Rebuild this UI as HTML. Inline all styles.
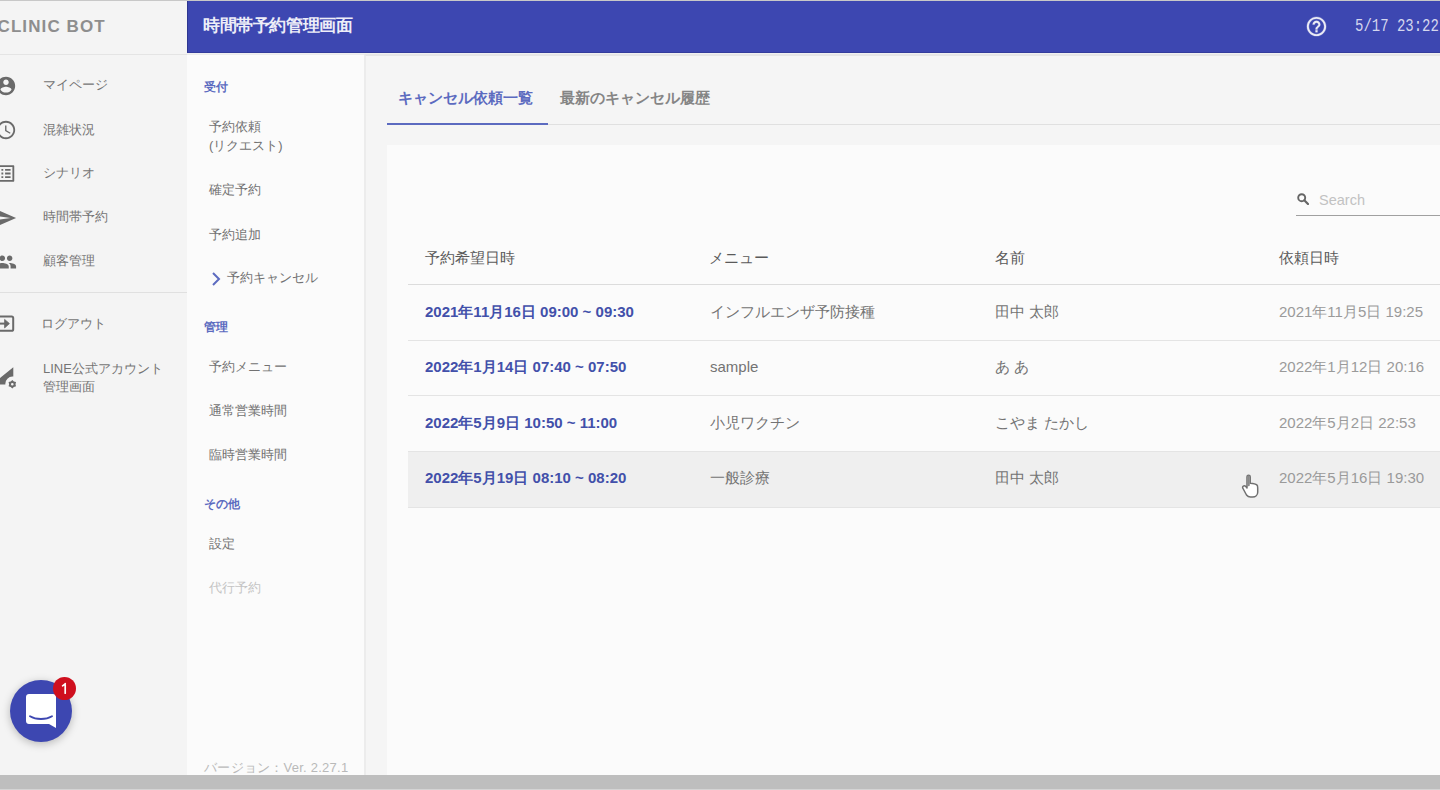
<!DOCTYPE html>
<html><head><meta charset="utf-8">
<style>
*{margin:0;padding:0;box-sizing:border-box}
html,body{width:1440px;height:790px;overflow:hidden;background:#f0f0f0;font-family:"Liberation Sans",sans-serif}
.a{position:absolute;white-space:nowrap}
#topline{left:0;top:0;width:1440px;height:1px;background:#c8c8c8}
#logo{left:0;top:1px;width:187px;height:54px;background:#f4f4f4;border-bottom:1px solid #e4e4e4}
#logotxt{left:-2.5px;top:17px;font-size:17px;letter-spacing:1.1px;font-weight:bold;color:#8e8e8e}
#side1{left:0;top:55px;width:187px;height:720px;background:#f4f4f4}
#hdr{left:187px;top:1px;width:1253px;height:52px;background:#3d47b1;border-left:1px solid #2e3690;border-bottom:1px solid #343c9c}
#title{left:203px;top:14px;font-size:17px;letter-spacing:-.4px;font-weight:bold;color:#eeeef8}
#time{left:1355px;top:15px;font-family:"Liberation Mono",monospace;font-size:19px;color:#d4d6ee;transform-origin:0 0;transform:scaleX(.735)}
#side2{left:187px;top:54px;width:177px;height:721px;background:#fbfbfb;border-top:1px solid #ececec}
#main{left:364px;top:54px;width:1076px;height:721px;background:#f5f5f5;border-left:2px solid #ececec;border-top:2px solid #e6e6e6}
#card{left:387px;top:145px;width:1053px;height:630px;background:#fbfbfb}
#bottom{left:0;top:775px;width:1440px;height:15px;background:#bebebe;border-bottom:1px solid #d4d4d4}
.m1{left:43px;font-size:13px;color:#747474}
.ic{left:-5px;width:22px;height:22px}
.sh{left:204px;font-size:12px;font-weight:bold;color:#5c6bc0}
.s2{left:209px;font-size:13px;color:#727272}
.tab{top:89px;font-size:15px;font-weight:bold}
.th{top:249px;font-size:15px;color:#5a5a5a}
.c1{left:425px;font-size:15px;font-weight:bold;color:#4250aa}
.c2{left:710px;font-size:15px;color:#737373}
.c3{left:995px;font-size:15px;color:#737373}
.c4{left:1279px;font-size:15px;color:#9a9a9a}
.bd{left:408px;width:1032px;height:1px;background:#e4e4e4}
</style></head><body>
<div class="a" id="topline"></div>
<div class="a" id="side1"></div>
<div class="a" id="logo"></div>
<div class="a" id="logotxt">CLINIC BOT</div>
<div class="a" id="side2"></div>
<div class="a" id="main"></div>
<div class="a" id="hdr"></div>
<div class="a" id="title">時間帯予約管理画面</div>
<svg class="a" style="left:1305.2px;top:15.2px" width="23" height="23" viewBox="0 0 24 24"><path fill="#ececf6" stroke="#ececf6" stroke-width=".3" d="M11 18h2v-2h-2v2zm1-16C6.48 2 2 6.48 2 12s4.48 10 10 10 10-4.48 10-10S17.52 2 12 2zm0 18c-4.41 0-8-3.59-8-8s3.59-8 8-8 8 3.59 8 8-3.59 8-8 8zm0-14c-2.21 0-4 1.79-4 4h2c0-1.1.9-2 2-2s2 .9 2 2c0 2-3 1.75-3 5h2c0-2.25 3-2.5 3-5 0-2.21-1.79-4-4-4z"/></svg>
<div class="a" id="time">5/17 23:22</div>

<!-- left menu -->
<svg class="a ic" style="top:74.5px" viewBox="0 0 24 24"><path fill="#6a6a6a" d="M12 2C6.48 2 2 6.48 2 12s4.48 10 10 10 10-4.48 10-10S17.52 2 12 2zm0 3c1.66 0 3 1.34 3 3s-1.34 3-3 3-3-1.34-3-3 1.34-3 3-3zm0 14.2c-2.5 0-4.71-1.28-6-3.22.03-1.99 4-3.08 6-3.08 1.99 0 5.97 1.09 6 3.08-1.29 1.94-3.5 3.22-6 3.22z"/></svg>
<div class="a m1" style="top:76px">マイページ</div>
<svg class="a ic" style="top:118.7px" viewBox="0 0 24 24"><path fill="#6a6a6a" d="M11.99 2C6.47 2 2 6.48 2 12s4.47 10 9.99 10C17.52 22 22 17.52 22 12S17.52 2 11.99 2zM12 20c-4.42 0-8-3.58-8-8s3.58-8 8-8 8 3.58 8 8-3.58 8-8 8zm.5-13H11v6l5.25 3.15.75-1.23-4.5-2.67z"/></svg>
<div class="a m1" style="top:121px">混雑状況</div>
<svg class="a ic" style="top:162.3px;height:23px" viewBox="0 0 24 24"><path fill="#6a6a6a" d="M19 5v14H5V5h14m1.1-2H3.9c-.5 0-.9.4-.9.9v16.2c0 .4.4.9.9.9h16.2c.4 0 .9-.5.9-.9V3.9c0-.5-.5-.9-.9-.9zM11 7h6v2h-6V7zm0 4h6v2h-6v-2zm0 4h6v2h-6zM7 7h2v2H7zm0 4h2v2H7zm0 4h2v2H7z"/></svg>
<div class="a m1" style="top:164px">シナリオ</div>
<svg class="a ic" style="top:207px" viewBox="0 0 24 24"><path fill="#6a6a6a" d="M2.01 21L23 12 2.01 3 2 10l15 2-15 2z"/></svg>
<div class="a m1" style="top:208px">時間帯予約</div>
<svg class="a ic" style="top:251px" viewBox="0 0 24 24"><path fill="#6a6a6a" d="M16 11c1.66 0 2.99-1.34 2.99-3S17.66 5 16 5c-1.66 0-3 1.34-3 3s1.34 3 3 3zm-8 0c1.66 0 2.99-1.34 2.99-3S9.66 5 8 5C6.34 5 5 6.34 5 8s1.34 3 3 3zm0 2c-2.33 0-7 1.17-7 3.5V19h14v-2.5c0-2.33-4.67-3.5-7-3.5zm8 0c-.29 0-.62.02-.97.05 1.16.84 1.97 1.97 1.97 3.45V19h6v-2.5c0-2.33-4.67-3.5-7-3.5z"/></svg>
<div class="a m1" style="top:252px">顧客管理</div>
<div class="a" style="left:0;top:292px;width:187px;height:1px;background:#e0e0e0"></div>
<svg class="a" style="left:0;top:310px" width="25" height="25" viewBox="0 310 25 25"><rect x="-8" y="316.4" width="21.2" height="14.4" rx="1.6" fill="none" stroke="#6a6a6a" stroke-width="2"/><path d="M-4 323.6H6.5" stroke="#6a6a6a" stroke-width="2"/><path d="M4.6 319.4L9.4 323.6L4.6 327.9Z" fill="#6a6a6a" stroke="#6a6a6a" stroke-width=".8" stroke-linejoin="round"/></svg>
<div class="a m1" style="left:41px;top:315px">ログアウト</div>
<svg class="a" style="left:0;top:360px" width="25" height="35" viewBox="0 360 25 35"><path fill="#6a6a6a" d="M-8 384.6L13.3 367.2V376.6A7.2 7.2 0 0 0 5.4 384.6Z"/><path fill="#6a6a6a" fill-rule="evenodd" d="M12.30 379.90 L13.90 381.43 L16.02 382.05 L15.50 384.20 L16.02 386.35 L13.90 386.97 L12.30 388.50 L10.70 386.97 L8.58 386.35 L9.10 384.20 L8.58 382.05 L10.70 381.43 Z M13.600000000000001 384.2 A1.3 1.3 0 1 0 11.0 384.2 A1.3 1.3 0 1 0 13.600000000000001 384.2Z"/></svg>
<div class="a m1" style="top:360px;line-height:17.5px">LINE公式アカウント<br>管理画面</div>

<!-- sub sidebar -->
<div class="a sh" style="top:79px">受付</div>
<div class="a s2" style="top:117px;line-height:19px">予約依頼<br>(リクエスト)</div>
<div class="a s2" style="top:181px">確定予約</div>
<div class="a s2" style="top:226px">予約追加</div>
<svg class="a" style="left:208px;top:270px" width="16" height="18" viewBox="0 0 16 18"><path d="M5 3l6 6-6 6" fill="none" stroke="#5c6bc0" stroke-width="2"/></svg>
<div class="a s2" style="left:227px;top:269px">予約キャンセル</div>
<div class="a sh" style="top:319px">管理</div>
<div class="a s2" style="top:358px">予約メニュー</div>
<div class="a s2" style="top:402px">通常営業時間</div>
<div class="a s2" style="top:446px">臨時営業時間</div>
<div class="a sh" style="top:496px">その他</div>
<div class="a s2" style="top:535px">設定</div>
<div class="a s2" style="top:579px;color:#c4c4c4">代行予約</div>
<div class="a" style="left:204px;top:759px;font-size:13px;letter-spacing:.25px;color:#b9b9b9">バージョン：Ver. 2.27.1</div>

<!-- tabs -->
<div class="a tab" style="left:398px;color:#5c6bc0">キャンセル依頼一覧</div>
<div class="a tab" style="left:560px;color:#858585">最新のキャンセル履歴</div>
<div class="a" style="left:387px;top:124px;width:1053px;height:1px;background:#e0e0e0"></div>
<div class="a" style="left:387px;top:122.5px;width:161px;height:2.5px;background:#5c6bc0"></div>

<div class="a" id="card"></div>
<!-- search -->
<svg class="a" style="left:1297px;top:193px" width="12" height="12" viewBox="0 0 12 12"><circle cx="4.7" cy="4.7" r="3.5" fill="none" stroke="#666" stroke-width="1.9"/><path d="M7.3 7.3L11 11" stroke="#666" stroke-width="2.2" stroke-linecap="round"/></svg>
<div class="a" style="left:1319px;top:191.5px;font-size:14.5px;color:#c2c2c2">Search</div>
<div class="a" style="left:1296px;top:215px;width:144px;height:1px;background:#a0a0a0"></div>

<!-- table -->
<div class="a th" style="left:425px">予約希望日時</div>
<div class="a th" style="left:709px">メニュー</div>
<div class="a th" style="left:995px">名前</div>
<div class="a th" style="left:1279px">依頼日時</div>
<div class="a bd" style="top:284px;background:#dcdcdc"></div>
<div class="a" style="left:408px;top:451px;width:1032px;height:56px;background:#efefef"></div>
<div class="a bd" style="top:340px"></div>
<div class="a bd" style="top:395px"></div>
<div class="a bd" style="top:451px"></div>
<div class="a bd" style="top:507px"></div>

<div class="a c1" style="top:303px">2021年11月16日 09:00 ~ 09:30</div>
<div class="a c2" style="top:303px">インフルエンザ予防接種</div>
<div class="a c3" style="top:303px">田中 太郎</div>
<div class="a c4" style="top:303px">2021年11月5日 19:25</div>

<div class="a c1" style="top:358px">2022年1月14日 07:40 ~ 07:50</div>
<div class="a c2" style="top:358px">sample</div>
<div class="a c3" style="top:358px">あ あ</div>
<div class="a c4" style="top:358px">2022年1月12日 20:16</div>

<div class="a c1" style="top:414px">2022年5月9日 10:50 ~ 11:00</div>
<div class="a c2" style="top:414px">小児ワクチン</div>
<div class="a c3" style="top:414px">こやま たかし</div>
<div class="a c4" style="top:414px">2022年5月2日 22:53</div>

<div class="a c1" style="top:469px">2022年5月19日 08:10 ~ 08:20</div>
<div class="a c2" style="top:469px">一般診療</div>
<div class="a c3" style="top:469px">田中 太郎</div>
<div class="a c4" style="top:469px">2022年5月16日 19:30</div>

<!-- cursor -->
<svg class="a" style="left:1240px;top:473px" width="22" height="26" viewBox="0 0 22 26"><path d="M7 3.8c0-1 .7-1.6 1.6-1.6s1.6.6 1.6 1.6v6.5c2.5.2 5.3.5 6.6 1.6.8.7.9 1.6.9 2.8v4.5c0 2.8-2.3 4.8-5 4.8h-2.2c-1.8 0-3-.7-4-2L3 15.5c-.6-.8-.5-1.9.3-2.4.8-.5 1.8-.3 2.5.5L7 15z" fill="#fff" stroke="#707070" stroke-width="1.5" stroke-linejoin="round"/><path d="M8.6 3.6v8.5" stroke="#8a8a8a" stroke-width="2.4" stroke-linecap="round"/></svg>

<!-- chat widget -->
<div class="a" style="left:10px;top:680px;width:62px;height:62px;border-radius:50%;background:#3d47b1;box-shadow:0 2px 8px rgba(0,0,0,.25)"></div>
<svg class="a" style="left:26px;top:694px" width="30" height="35" viewBox="0 0 30 35"><path d="M3 0h24c1.7 0 3 1.3 3 3v31l-7-4H3c-1.7 0-3-1.3-3-3V3c0-1.7 1.3-3 3-3z" fill="#fff"/><path d="M4 22.3c6 3.6 16 3.6 22 0" fill="none" stroke="#3d47b1" stroke-width="1.9" stroke-linecap="round"/></svg>
<div class="a" style="left:53px;top:677px;width:23px;height:23px;border-radius:50%;background:#cf0f1e"></div><svg class="a" style="left:53px;top:677px" width="23" height="23" viewBox="0 0 23 23"><path d="M12.2 6.6v9.6M12.2 6.8l-2.6 2" stroke="#fff" stroke-width="1.7" fill="none" stroke-linecap="round"/></svg>
<div class="a" id="bottom"></div>
</body></html>
